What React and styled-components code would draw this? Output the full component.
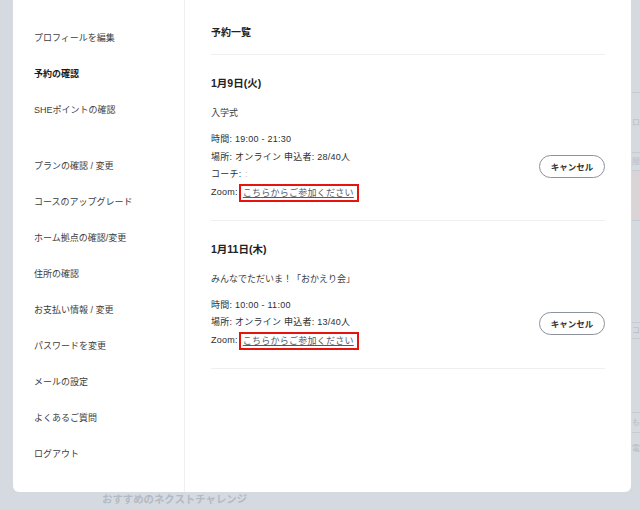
import styled, { createGlobalStyle } from "styled-components";

const GlobalStyle = createGlobalStyle`
  html, body {
    margin: 0;
    padding: 0;
    background: #d5d9e0;
    font-family: "Liberation Sans", "Noto Sans CJK JP", sans-serif;
  }
  * { box-sizing: border-box; }
`;

const Backdrop = styled.div`
  position: relative;
  width: 640px;
  height: 510px;
  overflow: hidden;
  background: #d5d9e0;
`;

const BehindPage = styled.div`
  display: flex;
  height: 100%;
`;

const BehindMain = styled.div`
  flex: 1;
  display: flex;
  flex-direction: column;
  justify-content: flex-end;
  padding: 0 0 3px 102px;
`;

const BehindHeading = styled.div`
  font-size: 10.4px;
  font-weight: 700;
  color: #b3b9c4;
  line-height: 14px;
`;

const BehindTable = styled.div`
  width: 8px;
  display: flex;
  flex-direction: column;
  padding-top: 92px;
`;

const BehindRow = styled.div`
  height: ${(p) => p.h}px;
  border-top: 1px solid #c6cbd3;
  font-size: 8px;
  color: #b8bdc6;
  line-height: ${(p) => p.h}px;
  white-space: nowrap;
  background: ${(p) => (p.tint ? "#dbd4d6" : "transparent")};
`;

const Modal = styled.div`
  position: absolute;
  top: 0;
  left: 13px;
  width: 618px;
  height: 492px;
  background: #fff;
  border-radius: 0 0 6px 6px;
  display: flex;
`;

const Sidebar = styled.nav`
  width: 172px;
  border-right: 1px solid #f0f0f2;
  padding-top: 20px;
  display: flex;
  flex-direction: column;
`;

const NavItem = styled.div`
  height: 36px;
  line-height: 36px;
  padding-left: 21px;
  font-size: 9px;
  color: ${(p) => (p.active ? "#1a1a1a" : "#3d3d3d")};
  font-weight: ${(p) => (p.active ? 700 : 400)};
  margin-bottom: ${(p) => (p.spaced ? "20px" : "0")};
`;

const Content = styled.main`
  flex: 1;
  padding: 0 26px;
  display: flex;
  flex-direction: column;
`;

const Title = styled.h1`
  margin: 0;
  padding-top: 25px;
  height: 55px;
  line-height: 16px;
  font-size: 10px;
  font-weight: 700;
  color: #222;
  border-bottom: 1px solid #eeeff1;
`;

const Card = styled.section`
  padding: 20px 0 18px;
  border-bottom: 1px solid #eeeff1;
`;

const DateLine = styled.div`
  font-size: 10.5px;
  font-weight: 700;
  line-height: 16px;
  color: #222;
`;

const EventName = styled.div`
  margin-top: 14px;
  font-size: 9px;
  line-height: 16px;
  color: #3d3d3d;
`;

const DetailRow = styled.div`
  margin-top: 10px;
  display: flex;
  align-items: center;
  justify-content: space-between;
`;

const Details = styled.div`
  display: flex;
  flex-direction: column;
`;

const Detail = styled.div`
  font-size: 9px;
  line-height: 17.5px;
  letter-spacing: 0.25px;
  color: #2e2e2e;
  display: flex;
  align-items: center;
  white-space: pre;
`;

const Faint = styled.span`
  color: #c8c8c8;
  margin-left: 1px;
`;

const ZoomLink = styled.a`
  margin-left: 1px;
  padding: 0 3px 0 2px;
  height: 18px;
  line-height: 15px;
  border: 2px solid #e5140f;
  color: #4f5b6e;
  text-decoration: underline;
  text-underline-offset: 1px;
`;

const CancelButton = styled.button`
  width: 66px;
  height: 23px;
  border: 1px solid #8c919a;
  border-radius: 12px;
  background: #fff;
  font-family: inherit;
  font-size: 8.5px;
  font-weight: 700;
  color: #333;
  padding: 0;
  cursor: pointer;
`;

const navItems = [
  { label: "プロフィールを編集" },
  { label: "予約の確認", active: true },
  { label: "SHEポイントの確認", spaced: true },
  { label: "プランの確認 / 変更" },
  { label: "コースのアップグレード" },
  { label: "ホーム拠点の確認/変更" },
  { label: "住所の確認" },
  { label: "お支払い情報 / 変更" },
  { label: "パスワードを変更" },
  { label: "メールの設定" },
  { label: "よくあるご質問" },
  { label: "ログアウト" },
];

const reservations = [
  {
    date: "1月9日(火)",
    name: "入学式",
    time: "19:00 - 21:30",
    place: "オンライン 申込者: 28/40人",
    coach: true,
  },
  {
    date: "1月11日(木)",
    name: "みんなでただいま！「おかえり会」",
    time: "10:00 - 11:00",
    place: "オンライン 申込者: 13/40人",
    coach: false,
  },
];

const behindRows = [
  { h: 60, t: "ロ" },
  { h: 18, t: "限" },
  { h: 50, t: "", tint: true },
  { h: 102, t: "" },
  { h: 16, t: "コ" },
  { h: 74, t: "" },
  { h: 20, t: "も" },
  { h: 32, t: "電" },
];

const App = () => {
  return (
    <Backdrop>
      <GlobalStyle />
      <BehindPage>
        <BehindMain>
          <BehindHeading>おすすめのネクストチャレンジ</BehindHeading>
        </BehindMain>
        <BehindTable>
          {behindRows.map((r, i) => (
            <BehindRow key={i} h={r.h} tint={r.tint}>
              {r.t}
            </BehindRow>
          ))}
        </BehindTable>
      </BehindPage>
      <Modal>
        <Sidebar>
          {navItems.map((item) => (
            <NavItem key={item.label} active={item.active} spaced={item.spaced}>
              {item.label}
            </NavItem>
          ))}
        </Sidebar>
        <Content>
          <Title>予約一覧</Title>
          {reservations.map((r) => (
            <Card key={r.date}>
              <DateLine>{r.date}</DateLine>
              <EventName>{r.name}</EventName>
              <DetailRow>
                <Details>
                  <Detail>時間: {r.time}</Detail>
                  <Detail>場所: {r.place}</Detail>
                  {r.coach && (
                    <Detail>
                      コーチ: <Faint>:</Faint>
                    </Detail>
                  )}
                  <Detail>
                    Zoom:
                    <ZoomLink href="#">こちらからご参加ください</ZoomLink>
                  </Detail>
                </Details>
                <CancelButton>キャンセル</CancelButton>
              </DetailRow>
            </Card>
          ))}
        </Content>
      </Modal>
    </Backdrop>
  );
};

export default App;
